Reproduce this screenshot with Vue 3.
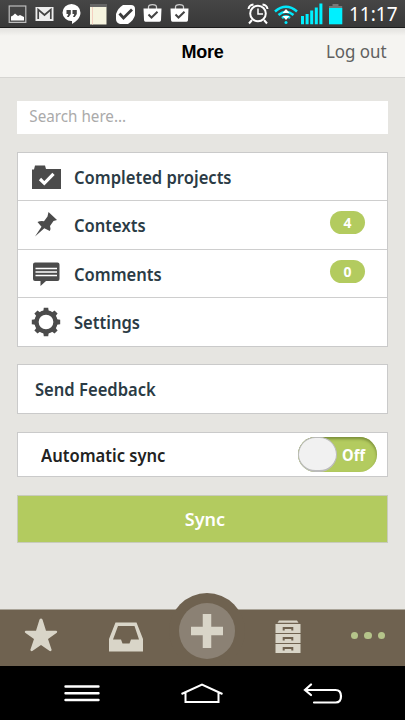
<script setup>
import { ref } from 'vue'

const rows = [
  { id: 'projects', label: 'Completed projects' },
  { id: 'contexts', label: 'Contexts', count: 4 },
  { id: 'comments', label: 'Comments', count: 0 },
  { id: 'settings', label: 'Settings' },
]
const teeth = [0, 45, 90, 135, 180, 225, 270, 315]
const drawers = [4, 14, 24]
const search = ref('')
</script>

<template>
  <div class="screen">
    <div class="status">
      <div class="notices">
        <svg viewBox="0 0 27 28">
          <rect x="5.2" y="6" width="16.6" height="16.4" fill="#444" stroke="#bdbdbd" stroke-width="1.2" />
          <path d="M7 20.5v-4l2-1 2-2 3 2.5 2-1 4 2v3.500z" fill="#fff" />
        </svg>
        <svg viewBox="0 0 27 28">
          <rect x="4.500" y="7" width="18" height="14" fill="#eee" />
          <path d="M7.200 19V9.500l6.300 5.500L19.800 9.500V19" fill="none" stroke="#444" stroke-width="1.700" />
        </svg>
        <svg viewBox="0 0 27 28">
          <path d="M13.500 4a9 8.800 0 0 1 9 8.800c0 5-4.500 9-8.500 11.200v-3A8.800 8.500 0 0 1 4.500 12.800 9 8.800 0 0 1 13.500 4z" fill="#fff" />
          <path d="M8.500 10h4.300v4l-2 3H9l1.300-3H8.500zM14.500 10h4.300v4l-2 3H15l1.300-3h-1.800z" fill="#444" />
        </svg>
        <svg viewBox="0 0 27 28">
          <path d="M5 4h17v3H5z" fill="#666" />
          <path d="M5 7h16.500v17.500H5z" fill="#f6f4df" />
          <path d="M7.500 7v17.500" stroke="#f4cfc0" />
        </svg>
        <svg viewBox="0 0 27 28">
          <path d="M11 5h8q4 0 4 4v6q-1 5-7 9H8q-4-1-4-5v-5q2-6 7-9z" fill="#fff" />
          <path d="M7.500 13.500l4 4.500 8.500-8.500" fill="none" stroke="#3c3c3c" stroke-width="2.800" />
        </svg>
        <svg v-for="n in 2" :key="n" viewBox="0 0 27 28">
          <path d="M9.500 9V7q0-2.300 4-2.300t4 2.300v2" fill="none" stroke="#ccc" stroke-width="1.300" />
          <path d="M4.500 8.500h18L22 20q0 1.700-1.500 1.700h-14Q5 21.700 5 20z" fill="#fff" />
          <path d="M9.500 14.500l3 3 6-5.800" fill="none" stroke="#444" stroke-width="2" />
        </svg>
      </div>
      <div class="system">
        <svg width="22" height="28" viewBox="0 0 22 28" fill="none" stroke="#fff">
          <circle cx="11" cy="13.500" r="7.800" stroke-width="2" />
          <path d="M11 8.500v5.500h5" stroke-width="1.500" />
          <path d="M1.500 9q.5-4 5-4.500M20.500 9q-.5-4-5-4.500M5 20l-3 3.500M17 20l3 3.500" stroke-width="2" />
        </svg>
        <svg class="wifi" width="24" height="28" viewBox="0 0 24 28" fill="none" stroke="#00e8fb" stroke-width="2.500">
          <path d="M1 11.500q11-9.500 22 0M4.500 15q7.500-6.500 15 0M8 18q4-3.500 8 0" />
          <path d="M12 9l3.500 4h-7zM12 20l-3.500-4h7z" fill="#fff" stroke="none" />
          <circle cx="12" cy="22.500" r="1.500" fill="#00e8fb" stroke="none" />
        </svg>
        <svg class="signal" width="22" height="28" viewBox="0 0 22 28" fill="#00f0ff">
          <path d="M0 16h3v8.200H0zM4.600 14h3v10.200h-3zM9.200 10.500h3v13.700h-3zM13.800 7.500h3v16.700h-3zM18.400 3.500h3v20.700h-3z" />
        </svg>
        <svg class="battery" width="14" height="28" viewBox="0 0 14 28">
          <path d="M3.500 4h6v2h3.700v2H0V6h3.500z" fill="#777" />
          <path d="M0 8h13.300v16.300H0z" fill="#00f0ff" />
        </svg>
        <span class="clock">11:17</span>
      </div>
    </div>

    <header class="header">
      <span></span>
      <h1>More</h1>
      <a class="logout">Log out</a>
    </header>

    <main class="content">
      <div class="field"><input v-model="search" class="search" placeholder="Search here..." /></div>

      <ul class="list">
        <li v-for="row in rows" :key="row.id" class="row">
          <svg class="icon" viewBox="0 0 30 30" fill="#4b4b4b">
            <g v-if="row.id === 'projects'">
              <path d="M1 7.500h2L4 3.500h10l1 3.500h15v20H1z" />
              <path d="M9 17l4.300 4.300 9.200-9.500" fill="none" stroke="#fff" stroke-width="3.200" />
            </g>
            <path v-else-if="row.id === 'contexts'" d="M17.500 2l8.500 8-3.500 1-3.500 5q1 2.500-.2 5l-5.500-2.800-9.300 8.300 6.500-9.800-4-4.700q3-1.500 6.500-.8l3.500-4.700z" />
            <g v-else-if="row.id === 'comments'">
              <path d="M4 3.500h22.500q2 0 2 2v14.500q0 2-2 2H15L9.500 27v-5H4q-2 0-2-2V5.500q0-2 2-2z" />
              <path d="M4.500 9.400h21.500M4.500 12.900h21.500M4.500 16.400h21.500" stroke="#fff" stroke-width="1.500" />
            </g>
            <g v-else>
              <circle cx="15" cy="15" r="9.500" fill="none" stroke="#4b4b4b" stroke-width="4.300" />
              <path v-for="a in teeth" :key="a" d="M12.300 4.500l.5-3.700h4.400l.5 3.700z" :transform="`rotate(${a} 15 15)`" />
            </g>
          </svg>
          <span class="label narrow">{{ row.label }}</span>
          <span v-if="row.count !== undefined" class="badge">{{ row.count }}</span>
        </li>
      </ul>

      <div class="panel feedback"><span class="narrow">Send Feedback</span></div>

      <div class="panel auto">
        <span class="narrow">Automatic sync</span>
        <div class="toggle"><i class="knob"></i><span class="off narrow">Off</span></div>
      </div>

      <button class="sync">Sync</button>
    </main>

    <nav class="tabs">
      <svg class="star" width="34" height="34" viewBox="0 0 34 34" fill="#d9d5c8">
        <path d="M15.500 1.500q1.500-2 3 0l3.500 11.300h10.300q1.500.5.500 2L24 21l3.700 11q-.5 1.500-2 1L17 27l-8.700 6q-1.500.5-2-1L10 21l-8.800-6.200q-1-1.500.5-2H12z" />
      </svg>
      <svg class="inbox" width="34" height="30" viewBox="0 0 34 30">
        <path fill="#d9d5c8" fill-rule="evenodd" d="M6.500.5h21L34 17v12.500H0V17zM9 4L4 17.500h8l1.500 4h7l1.500-4h8L25.500 4z" />
      </svg>
      <div class="add">
        <div class="disc">
          <svg width="32" height="34" viewBox="0 0 32 34"><path d="M16 0v34M0 17h32" stroke="#d9d5c8" stroke-width="8.500" /></svg>
        </div>
      </div>
      <svg class="cabinet" width="26" height="34" viewBox="0 0 26 34">
        <path d="M4 .5h18l1.500 2.300h-21z" fill="#d9d5c8" />
        <g v-for="y in drawers" :key="y">
          <rect x=".5" :y="y" width="25" height="9" fill="#d9d5c8" />
          <path :d="`M8.700 ${y + 6.500}v-2.500h8.600v2.500`" fill="none" stroke="#6f6250" stroke-width="2" />
        </g>
      </svg>
      <div class="dots"><i></i><i></i><i></i></div>
    </nav>

    <div class="keys">
      <svg width="36" height="20" viewBox="0 0 36 20" stroke="#fff" stroke-width="2.400" stroke-linecap="round">
        <path d="M1.500 3.500h33M1.500 10.200h33M1.500 17h33" />
      </svg>
      <svg class="home" width="44" height="22" viewBox="0 0 44 22" fill="none" stroke="#fff" stroke-width="2">
        <path d="M1.500 11L22 1.500 42.500 11M5.500 10v9h33v-9" />
      </svg>
      <svg class="back" width="40" height="22" viewBox="0 0 40 22" fill="none" stroke="#fff" stroke-width="2.200" stroke-linecap="round">
        <path d="M8 1.500L2 7l6 5M2 7h30.500q5.500 0 5.500 6.300t-5.500 6.200H11" />
      </svg>
    </div>
  </div>
</template>

<style>
body { margin: 0; }
</style>

<style scoped>
* { box-sizing: border-box; }
.screen {
  width: 405px;
  height: 720px;
  overflow: hidden;
  display: flex;
  flex-direction: column;
  background: #e6e5e1;
  font-family: "Noto Sans", sans-serif;
  color: #2b3b45;
}
svg { display: block; flex: none; }
.narrow { transform: scaleX(.92); transform-origin: left; }
.status {
  height: 28px;
  flex: none;
  display: flex;
  justify-content: space-between;
  background: linear-gradient(#464646, #383838);
  border-bottom: 1px solid #1b1b1b;
}
.notices { display: flex; padding-left: 3.5px; }
.notices svg { width: 27px; height: 28px; }
.system { display: flex; padding-right: 7px; }
.wifi { margin-left: 5px; }
.signal { margin-left: 3px; }
.battery { margin-left: 6px; }
.clock {
  width: 49px;
  margin-left: 6px;
  color: #fff;
  font-size: 19px;
  line-height: 29px;
  white-space: nowrap;
}
.header {
  height: 50px;
  flex: none;
  display: grid;
  grid-template-columns: 1fr auto 1fr;
  align-items: start;
  padding: 0 18px;
  background: linear-gradient(#e2e1de, #f5f4f1 8px);
  border-bottom: 1px solid #d6d5d2;
}
h1 {
  margin: 0;
  font: bold 18px/48px "Liberation Sans", sans-serif;
  letter-spacing: -.3px;
  color: #000;
}
.logout {
  justify-self: end;
  color: #606060;
  font-size: 18px;
  line-height: 47px;
  transform: scaleX(.94);
  transform-origin: right;
}
.content {
  flex: none;
  height: 531px;
  padding: 23px 17px 0;
  display: flex;
  flex-direction: column;
}
.field { height: 33px; flex: none; background: #fff; }
.search {
  width: 100%;
  height: 32px;
  border: 0;
  padding: 0 13px 2px;
  background: transparent;
  font: 16px "Noto Sans", sans-serif;
  outline: 0;
  transform: scaleX(.95);
  transform-origin: left;
}
.search::placeholder { color: #aaa; opacity: 1; }
.list {
  list-style: none;
  margin: 18px 0 0;
  padding: 0;
  height: 194.500px;
  flex: none;
  display: grid;
  grid-template-rows: 47px 49px 48px 48.5px;
  background: #fff;
  border: 1px solid #cacaca;
}
.row {
  display: flex;
  align-items: center;
  padding: 0 22px 0 13px;
}
.row + .row { border-top: 1px solid #cecece; }
.icon { width: 30px; height: 30px; }
.label, .panel, .sync {
  font-size: 18px;
  font-weight: 600;
  white-space: nowrap;
}
.label { margin-left: 13px; }
.badge {
  width: 35px;
  height: 23px;
  margin: 0 0 5px auto;
  border-radius: 12px;
  background: #b3cb5f;
  color: #fff;
  font-size: 14px;
  font-weight: 700;
  line-height: 23px;
  text-align: center;
}
.panel {
  flex: none;
  display: flex;
  align-items: center;
  justify-content: space-between;
  background: #fff;
  border: 1px solid #cacaca;
}
.feedback { height: 50px; margin-top: 17.500px; padding-left: 17px; }
.auto {
  height: 45px;
  margin-top: 18px;
  padding: 0 10px 0 23px;
  color: #222;
}
.toggle {
  width: 79px;
  height: 35px;
  display: flex;
  align-items: center;
  border-radius: 18px;
  background: #b3cb5f;
  box-shadow: inset 0 2px 3px #788c38;
  color: #fff;
  font-size: 16px;
}
.knob {
  width: 39px;
  height: 35px;
  border: 1px solid #bbb;
  border-bottom-width: 2px;
  border-radius: 18px;
  background: #f1f1f1;
}
.off { margin-left: 5px; font-weight: 700; }
.sync {
  height: 48px;
  flex: none;
  margin-top: 18px;
  padding: 0 0 0 5px;
  border: 1px solid #c8cbbb;
  background: #b3cb5f;
  color: #fff;
  font-family: inherit;
}
.tabs {
  height: 57px;
  flex: none;
  display: flex;
  align-items: flex-start;
  background: #6f6250;
  border-top: 1px solid #aaa498;
}
.star { margin: 8px 0 0 24px; }
.inbox { margin: 12px 0 0 51px; }
.add {
  width: 76px;
  height: 76px;
  margin: -17px 0 0 26px;
  display: flex;
  align-items: center;
  justify-content: center;
  border-radius: 50%;
  background: #6f6250;
}
.disc {
  width: 56px;
  height: 56px;
  display: flex;
  align-items: center;
  justify-content: center;
  border-radius: 50%;
  background: #8b8174;
}
.cabinet { margin: 10px 0 0 30px; }
.dots { display: flex; gap: 6px; margin: 22px 0 0 50px; }
.dots i { width: 7.300px; height: 7.300px; border-radius: 50%; background: #b5c48a; }
.keys {
  height: 54px;
  flex: none;
  display: flex;
  align-items: flex-start;
  padding: 17px 0 0 64px;
  position: relative;
  background: #000;
}
.home { margin-left: 80px; }
.back { margin: 0 0 0 79px; }
</style>
